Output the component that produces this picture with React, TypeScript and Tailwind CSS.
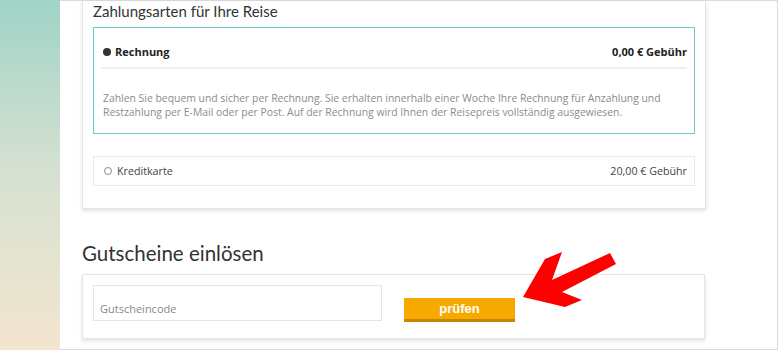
import React from "react";

const body = { fontFamily: '"Open Sans", "Liberation Sans", sans-serif' };
const head = { fontFamily: 'Lato, "Noto Sans", sans-serif' };

export default function App() {
  return (
    <div className="relative flex h-[350px] w-[778px] overflow-hidden bg-white" style={body}>
      {/* left decor strip */}
      <div className="h-full w-[60px] shrink-0 bg-gradient-to-b from-[#9fd4c7] via-[#d6e1d1] to-[#f3e5cf]" />

      {/* page */}
      <div className="flex h-full flex-1 flex-col border-y border-r border-[#dadada] pl-[22px]">
        {/* payment card */}
        <div className="w-[624px] border-x border-b border-[#e3e3e3] px-[10px] pb-[22px] shadow-[0_2px_4px_rgba(0,0,0,0.12)]">
          <h2 className="text-[15px] leading-[20px] text-[#333]" style={head}>
            Zahlungsarten für Ihre Reise
          </h2>

          {/* selected option */}
          <div className="mt-[6px] border border-[#6ccaca] px-[7px] pb-[14px]">
            <div className="flex items-center justify-between pt-[15px] pb-[6px] text-[11px] font-bold leading-[18px] text-[#222]">
              <div className="flex items-center gap-[4px]">
                <span className="ml-[2px] inline-block h-[8px] w-[8px] rounded-full bg-[#333]" />
                <span>Rechnung</span>
              </div>
              <span>0,00 € Gebühr</span>
            </div>
            <div className="h-[2px] bg-[#efefef]" />
            <p className="mt-[22px] whitespace-nowrap pl-[2px] text-[10.4px] leading-[14px] text-[#8c8c8c]">
              Zahlen Sie bequem und sicher per Rechnung. Sie erhalten innerhalb einer Woche Ihre Rechnung für Anzahlung und
              <br />
              Restzahlung per E-Mail oder per Post. Auf der Rechnung wird Ihnen der Reisepreis vollständig ausgewiesen.
            </p>
          </div>

          {/* other option */}
          <div className="mt-[22px] flex h-[30px] items-center justify-between border border-[#e8e8e8] pl-[10px] pr-[7px] text-[10.7px] text-[#444]">
            <div className="flex items-center gap-[5px]">
              <span className="inline-block h-[8px] w-[8px] rounded-full border border-[#888]" />
              <span>Kreditkarte</span>
            </div>
            <span>20,00 € Gebühr</span>
          </div>
        </div>

        <h2 className="mt-[30px] text-[20.5px] leading-[28px] text-[#333]" style={head}>
          Gutscheine einlösen
        </h2>

        {/* voucher card */}
        <div className="mt-[7px] flex h-[65px] w-[623px] items-start border border-[#e5e5e5] pl-[10px] pt-[10px] shadow-[0_2px_4px_rgba(0,0,0,0.12)]">
          <div className="h-[36px] w-[289px] border border-[#e5e5e5] pl-[6px] pt-[15px] text-[11px] leading-[16px] text-[#888]">
            Gutscheincode
          </div>
          <button
            className="ml-[22px] mt-[13px] h-[24px] w-[111px] border-b-[3px] border-[#c48700] bg-[#f8a900] text-[13px] font-bold leading-[21px] text-white"
            style={{ fontFamily: '"Liberation Sans", Arial, sans-serif' }}
          >
            prüfen
          </button>
        </div>
      </div>

      {/* annotation arrow */}
      <svg className="pointer-events-none absolute left-0 top-0" width="778" height="350" viewBox="0 0 778 350">
        <polygon
          fill="#ff0000"
          points="523,297 545,259 562,252 552,280 610,253 616,264 562,292 582,300 565,307"
        />
      </svg>
    </div>
  );
}
